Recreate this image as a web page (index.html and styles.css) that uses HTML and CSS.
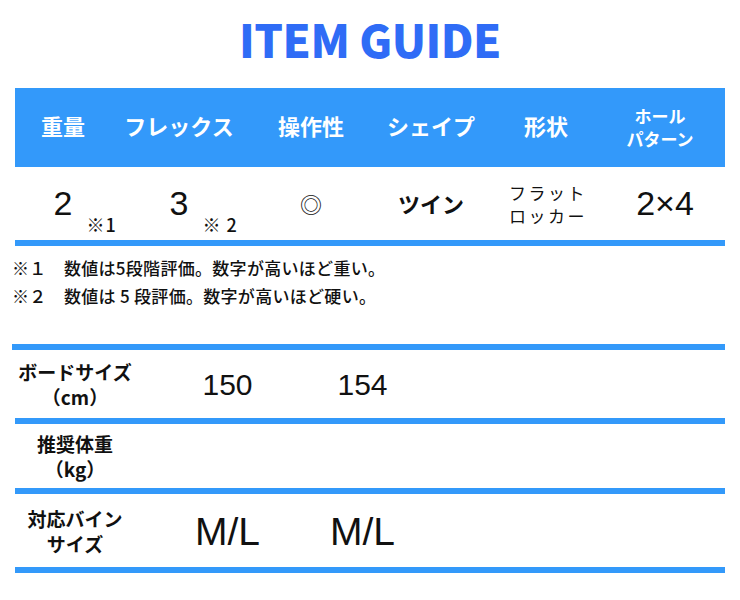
FILE: index.html
```html
<!DOCTYPE html>
<html lang="ja">
<head>
<meta charset="utf-8">
<title>ITEM GUIDE</title>
<link rel="stylesheet" href="styles.css">
</head>
<body>
<div class="page">
  <h1 class="title">ITEM GUIDE</h1>
  <div class="spec">
    <div class="spec-head">
      <div class="cell">重量</div>
      <div class="cell">フレックス</div>
      <div class="cell">操作性</div>
      <div class="cell">シェイプ</div>
      <div class="cell">形状</div>
      <div class="cell small"><span class="ln">ホール</span><span class="ln">パターン</span></div>
    </div>
    <div class="spec-row">
      <div class="cell"><span class="num">2<span class="note-mark">※1</span></span></div>
      <div class="cell"><span class="num">3<span class="note-mark">※ 2</span></span></div>
      <div class="cell"><span class="mark">◎</span></div>
      <div class="cell"><span class="bold">ツイン</span></div>
      <div class="cell"><span class="shape"><span class="ln">フラット</span><span class="ln">ロッカー</span></span></div>
      <div class="cell"><span class="num">2×4</span></div>
    </div>
  </div>
  <div class="notes">
    <p>※１　数値は5段階評価。数字が高いほど重い。</p>
    <p>※２　数値は 5 段評価。数字が高いほど硬い。</p>
  </div>
  <div class="size-row r-board">
    <div class="label"><span class="ln">ボードサイズ</span><span class="ln">（cm）</span></div>
    <div class="val">150</div>
    <div class="val">154</div>
  </div>
  <div class="size-row r-weight">
    <div class="label"><span class="ln">推奨体重</span><span class="ln">（kg）</span></div>
    <div class="val"></div>
    <div class="val"></div>
  </div>
  <div class="size-row r-bind">
    <div class="label"><span class="ln">対応バイン</span><span class="ln">サイズ</span></div>
    <div class="val big">M/L</div>
    <div class="val big">M/L</div>
  </div>
</div>
</body>
</html>
```
FILE: styles.css
```css
* { box-sizing: border-box; }
html, body { margin: 0; padding: 0; background: #fff; }
body {
  width: 740px;
  height: 600px;
  overflow: hidden;
  font-family: "Noto Sans CJK JP", "Noto Sans", sans-serif;
  color: #111;
}
.page { padding: 0 15px; }
.title {
  margin: 0;
  height: 88px;
  padding-top: 10px;
  line-height: 58px;
  text-align: center;
  font-size: 45px;
  font-weight: 900;
  color: #2f6cf6;
  letter-spacing: -0.5px;
}
.spec-head, .spec-row {
  display: grid;
  grid-template-columns: 96px 136px 128px 112px 118px 120px;
}
.spec-head {
  height: 79px;
  padding-bottom: 5px;
  background: #3399fa;
  color: #fff;
  font-weight: 700;
  font-size: 22px;
}
.cell {
  display: flex;
  align-items: center;
  justify-content: center;
  text-align: center;
}
.ln { display: block; }
.spec-head .cell.small {
  flex-direction: column;
  font-size: 17px;
  line-height: 23px;
  padding-right: 10px;
  padding-top: 3px;
}
.spec-row {
  height: 79px;
  border-bottom: 6px solid #3399fa;
  padding-bottom: 2px;
}
.num {
  position: relative;
  font-family: "Liberation Sans", Arial, sans-serif;
  font-size: 34px;
  line-height: 1;
}
.note-mark {
  position: absolute;
  left: 100%;
  top: 29px;
  margin-left: 14px;
  white-space: nowrap;
  font-family: "Noto Sans CJK JP", sans-serif;
  font-size: 18px;
  font-weight: 500;
  letter-spacing: 1px;
}
.mark { font-size: 22px; }
.bold { font-weight: 700; font-size: 22px; }
.shape {
  font-size: 17px;
  line-height: 23px;
  letter-spacing: 2.5px;
  text-align: left;
  padding-top: 2px;
  padding-left: 4px;
}
.notes {
  padding-top: 8px;
  margin-left: -3px;
  border-bottom: 6px solid #3399fa;
  height: 104px;
}
.notes p {
  margin: 0;
  font-size: 17px;
  line-height: 28px;
  font-weight: 500;
  letter-spacing: 0.3px;
}
.size-row {
  display: grid;
  grid-template-columns: 145px 135px 135px;
  align-items: center;
  border-bottom: 6px solid #3399fa;
}
.r-board { height: 74px; }
.r-weight { height: 70px; }
.r-bind { height: 79px; }
.label {
  padding-right: 25px;
  text-align: center;
  font-weight: 700;
  font-size: 19px;
  line-height: 25px;
}
.val {
  text-align: center;
  font-family: "Liberation Sans", Arial, sans-serif;
  font-size: 30px;
  padding-top: 2px;
}
.val.big { font-size: 39px; }
```
